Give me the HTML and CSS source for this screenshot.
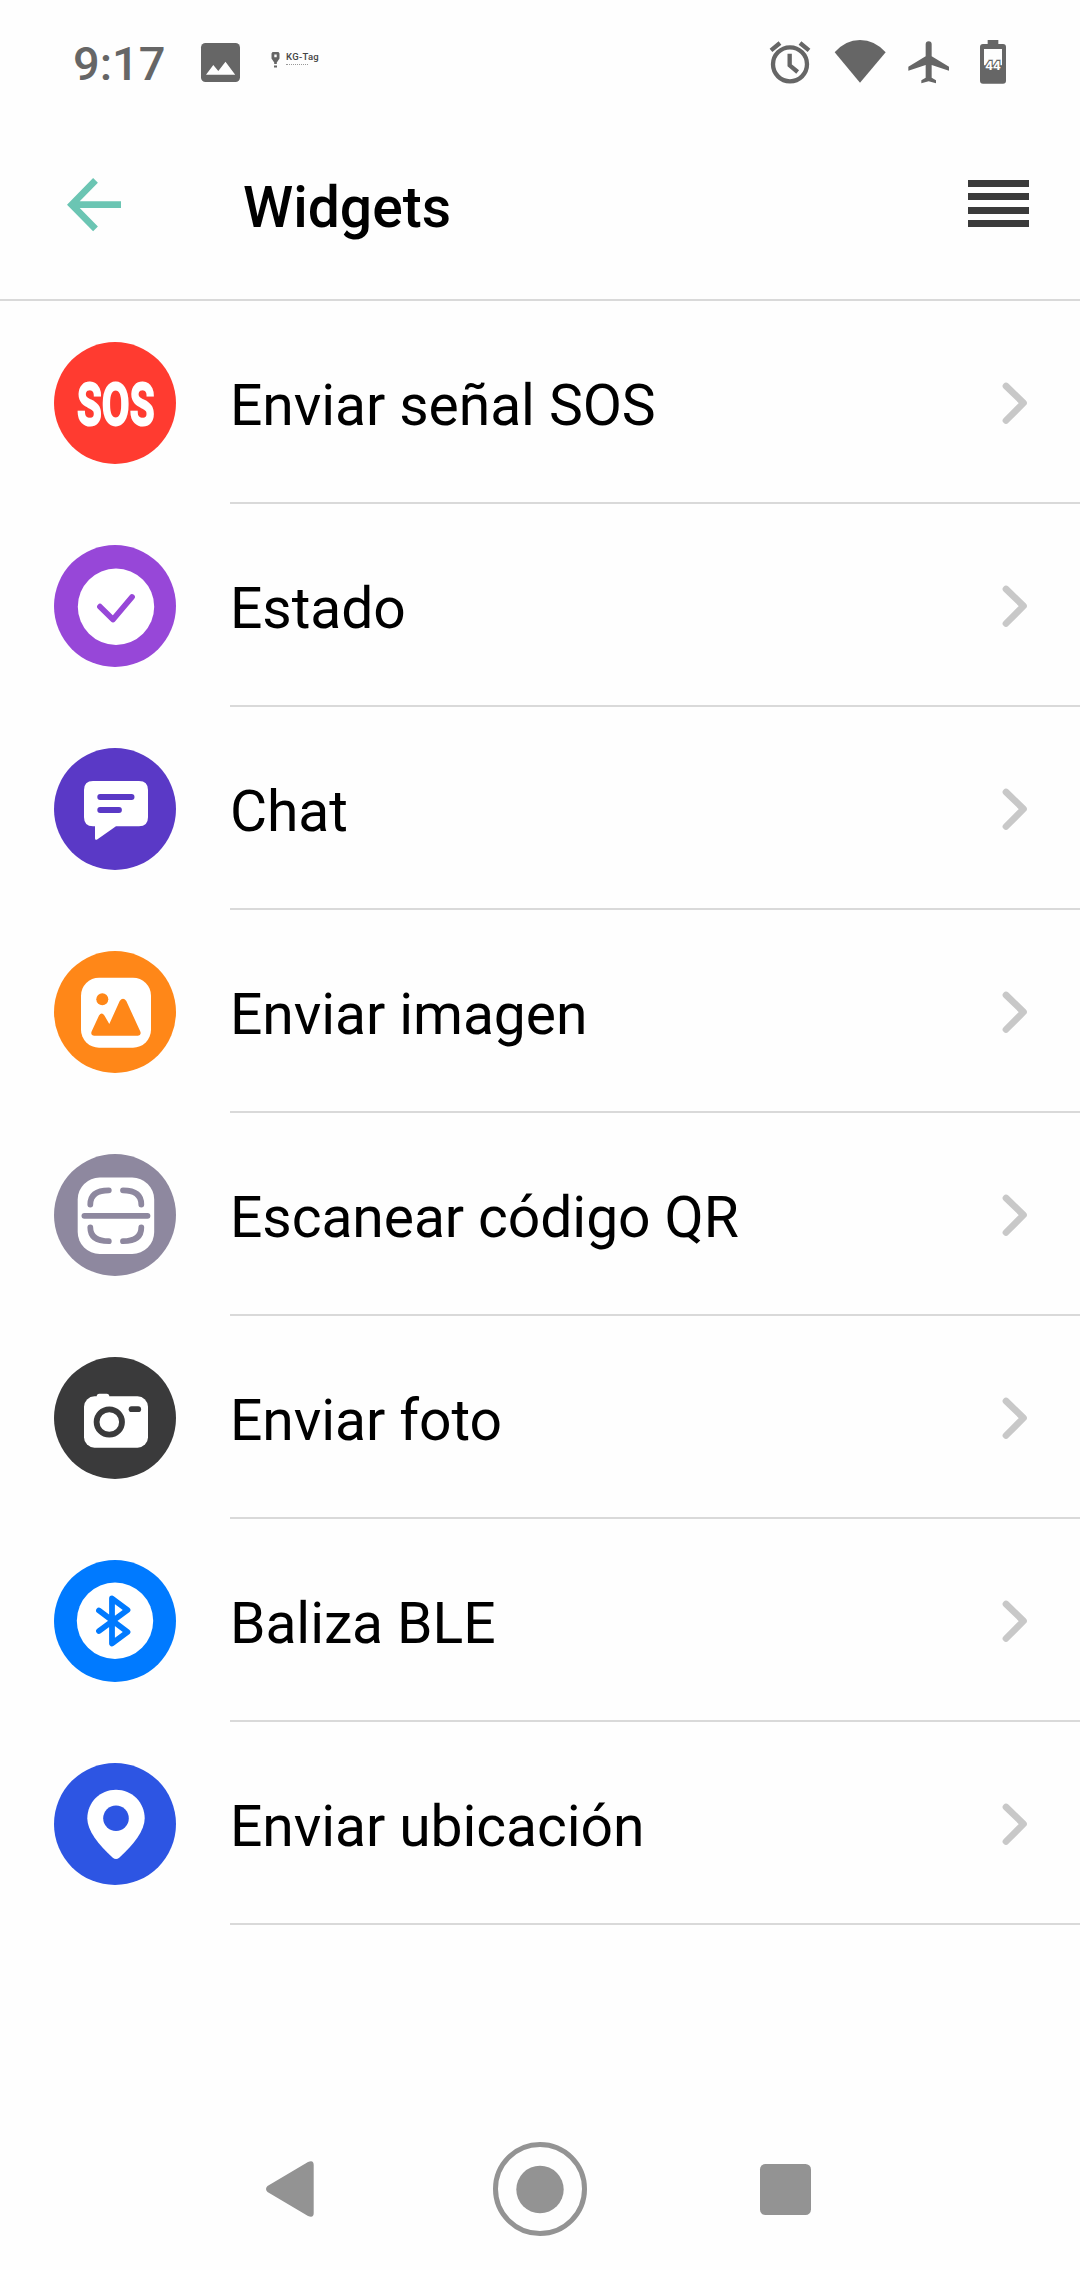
FILE: index.html
```html
<!DOCTYPE html>
<html lang="es">
<head>
<meta charset="utf-8">
<title>Widgets</title>
<link rel="stylesheet" href="styles.css">
</head>
<body>
<div class="screen">
  <div class="statusbar">
    <span class="clock">9:17</span>
    <svg class="st-image" viewBox="0 0 39 39"><rect width="39" height="39" rx="4.5"/><path class="cut" d="M5 31.7 12.3 22l5 6 7.200-9.300L34.200 31.700z"/></svg>
    <div class="tag">
      <svg class="tag-pin" viewBox="0 0 9 16"><path fill-rule="evenodd" d="M1.500 0h6l1 1.500v5L5.800 10.500v1.500H3.200v-1.500L.5 6.500v-5zM3.300 2.600v2.600h2.400V2.600zM3 13.500h3v2H3z"/></svg>
      <div class="tag-text"><span class="tag-name">KG-Tag</span><span class="tag-dots"></span></div>
    </div>
    <div class="st-right">
      <svg width="42" height="44" viewBox="86 60 126 132"><g fill="none" stroke="#666" stroke-width="13"><circle cx="149" cy="133" r="51"/><path d="M148 101v35l24 20M92 91l27-22M206 91l-27-22"/></g></svg>
      <svg class="wifi" width="52" height="44" viewBox="280 60 156 132"><path d="M282 97Q314 60 358 60T435 97L358 188z"/></svg>
      <svg class="plane" width="42" height="44" viewBox="503 60 126 132"><path d="M556 73q0-9 9-9t9 9v36l52 31v12l-52-17v38l13 8v9l-22-6-22 6v-9l13-8v-38l-52 17v-12l52-31z"/></svg>
      <svg class="battery" width="26" height="44" viewBox="720 60 78 132"><path fill-rule="evenodd" d="M743 60h32v12h14q9 0 9 9v101q0 9-9 9h-60q-9 0-9-9V81q0-9 9-9h14zM732 87v49h54V87z"/><text x="759" y="149" textLength="46" lengthAdjust="spacingAndGlyphs">44</text></svg>
    </div>
  </div>

  <header class="header">
    <svg class="back" viewBox="0 0 54 54"><path d="M54 26.700H5M28.500 2.400 4.700 26.700l23.800 24.200"/></svg>
    <h1 class="title">Widgets</h1>
    <div class="menu"><i></i><i></i><i></i><i></i></div>
  </header>

  <main class="list">
    <div class="row">
      <svg class="icon red" viewBox="0 0 122 122"><circle class="bg" cx="61" cy="61" r="61"/><text class="sos" x="23" y="83" textLength="77.500" lengthAdjust="spacingAndGlyphs">SOS</text></svg>
      <div class="cell"><span>Enviar señal SOS</span><svg class="chev" viewBox="0 0 26 42"><path d="M4 4 21.500 21 4 38.500"/></svg></div>
    </div>
    <div class="row">
      <svg class="icon purple" viewBox="0 0 122 122"><circle class="bg" cx="61" cy="61" r="61"/><circle class="w" cx="62" cy="61.700" r="38.200"/><path class="ln" d="M46 61.700 59 74.500 78 52"/></svg>
      <div class="cell"><span>Estado</span><svg class="chev" viewBox="0 0 26 42"><path d="M4 4 21.500 21 4 38.500"/></svg></div>
    </div>
    <div class="row">
      <svg class="icon indigo" viewBox="0 0 122 122"><circle class="bg" cx="61" cy="61" r="61"/><path class="w" d="M39 33H85q9 0 9 9V69.300q0 9-9 9H62L43.500 91.200q-2.500 1.400-2.500-1V78.300H39q-9 0-9-9V42q0-9 9-9z"/><path class="ln" d="M46.200 49H77.600M46.200 62H65"/></svg>
      <div class="cell"><span>Chat</span><svg class="chev" viewBox="0 0 26 42"><path d="M4 4 21.500 21 4 38.500"/></svg></div>
    </div>
    <div class="row">
      <svg class="icon orange" viewBox="0 0 122 122"><circle class="bg" cx="61" cy="61" r="61"/><rect class="w" x="27" y="26.700" width="70" height="70" rx="18"/><circle class="bg" cx="48.300" cy="48.300" r="6"/><path class="bg" d="M40 84.700q-3.800-.5-2.400-4.200L45 64.500q2.700-4 5.400 0L55.300 73 65.700 50q3.300-4.600 6.600 0L86.300 80.500q1.400 3.700-2.400 4.200z"/></svg>
      <div class="cell"><span>Enviar imagen</span><svg class="chev" viewBox="0 0 26 42"><path d="M4 4 21.500 21 4 38.500"/></svg></div>
    </div>
    <div class="row">
      <svg class="icon mauve" viewBox="0 0 122 122"><circle class="bg" cx="61" cy="61" r="61"/><rect class="w" x="23.700" y="23.500" width="76.500" height="76.500" rx="22"/><path class="ln" d="M36.300 50.500q0-14.200 18.500-14.200M69 36.300q18.300 0 18.300 14.200M36.300 73.500q0 13.700 18.500 13.700M69 87.200q18.300 0 18.300-13.700M30.400 61.800H93.500"/></svg>
      <div class="cell"><span>Escanear código QR</span><svg class="chev" viewBox="0 0 26 42"><path d="M4 4 21.500 21 4 38.500"/></svg></div>
    </div>
    <div class="row">
      <svg class="icon dark" viewBox="0 0 122 122"><circle class="bg" cx="61" cy="61" r="61"/><rect class="w" x="30" y="39.300" width="64" height="51.400" rx="10.500"/><rect class="w" x="42.700" y="36.700" width="12.600" height="8" rx="2.600"/><circle class="ln" cx="55.300" cy="65" r="12.700"/><path class="ln" d="M77.600 52.200H84.200"/></svg>
      <div class="cell"><span>Enviar foto</span><svg class="chev" viewBox="0 0 26 42"><path d="M4 4 21.500 21 4 38.500"/></svg></div>
    </div>
    <div class="row">
      <svg class="icon blue" viewBox="0 0 122 122"><circle class="bg" cx="61" cy="61" r="61"/><circle class="w" cx="61" cy="60.800" r="38.200"/><path class="ln" d="M45 50.500 73.500 72 58 83.500V38.500L73.500 50 45 71"/></svg>
      <div class="cell"><span>Baliza BLE</span><svg class="chev" viewBox="0 0 26 42"><path d="M4 4 21.500 21 4 38.500"/></svg></div>
    </div>
    <div class="row">
      <svg class="icon royal" viewBox="0 0 122 122"><circle class="bg" cx="61" cy="61" r="61"/><path class="w" d="M62 26.700c16 0 28.700 12.500 28.700 28.800 0 12-11 26-25.500 39.200q-3.200 2.500-6.400 0C44.300 81.500 33.300 67.500 33.300 55.500 33.300 39.200 46 26.700 62 26.700z"/><circle class="bg" cx="62" cy="55.300" r="12.800"/></svg>
      <div class="cell"><span>Enviar ubicación</span><svg class="chev" viewBox="0 0 26 42"><path d="M4 4 21.500 21 4 38.500"/></svg></div>
    </div>
  </main>

  <nav class="navbar">
    <svg width="48" height="56" viewBox="0 0 48 56"><path d="M1.500 25 42 1q5.700-2.500 5.700 3V52q0 5.500-5.700 3L1.500 31q-3-3 0-6z"/></svg>
    <svg class="home" width="94" height="94" viewBox="0 0 94 94"><circle class="ring" cx="47" cy="47" r="44.500"/><circle cx="47" cy="47.500" r="23.700"/></svg>
    <svg width="51" height="51" viewBox="0 0 51 51"><rect width="51" height="51" rx="5.500"/></svg>
  </nav>
</div>
</body>
</html>
```

FILE: styles.css
```css
* { box-sizing: border-box; }
body { margin: 0; background: #fefefe; font-family: Roboto, "Liberation Sans", sans-serif; color: #000; }
svg { display: block; flex: none; overflow: visible; }
.screen { width: 1080px; height: 2270px; display: flex; flex-direction: column; overflow: hidden; }

.statusbar { height: 124px; padding: 0 74px 0 73px; display: flex; align-items: center; color: #666; fill: #666; }
.clock { width: 128px; font-size: 47px; font-weight: 500; line-height: 56px; padding-top: 3px; }
.st-image { width: 39px; height: 39px; }
.cut { fill: #fefefe; }
.tag { display: flex; gap: 6px; margin: -4px 0 0 31px; }
.tag-pin { width: 9px; height: 16px; }
.tag-text { display: flex; flex-direction: column; gap: 2px; }
.tag-name { font-size: 9.500px; line-height: 10px; font-weight: 500; letter-spacing: .3px; color: #444; }
.tag-dots { width: 22px; height: 0; border-top: 1px dotted #999; }
.st-right { display: flex; margin-left: auto; }
.wifi { margin-left: 23px; }
.plane { margin-left: 22px; }
.battery { margin-left: 30px; }
.battery text { font-size: 41px; font-weight: 700; text-anchor: middle; fill: #fefefe; stroke: #666; stroke-width: 7px; paint-order: stroke; }

.header { height: 177px; border-bottom: 2px solid #d9d9d9; padding: 0 51px 0 67px; display: flex; align-items: flex-start; }
.back { width: 54px; height: 54px; margin-top: 54px; fill: none; stroke: #6bc5b3; stroke-width: 6.700px; }
.title { margin: 50px 0 0 122px; font-size: 57px; line-height: 67px; font-weight: 500; }
.menu { margin: 56px 0 0 auto; width: 61px; height: 47px; display: flex; flex-direction: column; justify-content: space-between; }
.menu i { height: 6.700px; background: #3a3a3a; }

.row { height: 203px; display: flex; padding-left: 54px; }
.icon { width: 122px; height: 122px; margin: 41px 54px 0 0; }
.bg { fill: var(--c); }
.w { fill: #fff; }
.ln { fill: none; stroke: var(--c); stroke-width: 5.800px; stroke-linecap: round; stroke-linejoin: round; }
.sos { font-size: 60px; font-weight: 700; fill: #fff; stroke: #fff; stroke-width: 2px; }
.red { --c: #ff3b30; }
.purple { --c: #9747d8; }
.indigo { --c: #5a39c6; }
.orange { --c: #ff8718; }
.mauve { --c: #8e889f; }
.dark { --c: #3a3a3b; }
.blue { --c: #007aff; }
.royal { --c: #2d55e3; }
.cell { flex: 1; border-bottom: 2px solid #d9d9d9; display: flex; align-items: center; justify-content: space-between; padding-right: 52px; font-size: 57px; line-height: 67px; letter-spacing: -.08px; }
.cell span { padding-top: 8px; white-space: nowrap; }
.chev { width: 26px; height: 42px; margin-top: 2px; fill: none; stroke: #c8c8c8; stroke-width: 6.700px; stroke-linecap: round; stroke-linejoin: round; }

.navbar { margin-top: auto; height: 162px; padding: 0 269px 0 266px; display: flex; align-items: center; fill: #939393; }
.home { margin: 0 173px 0 179px; }
.ring { fill: none; stroke: #939393; stroke-width: 5px; }
```
